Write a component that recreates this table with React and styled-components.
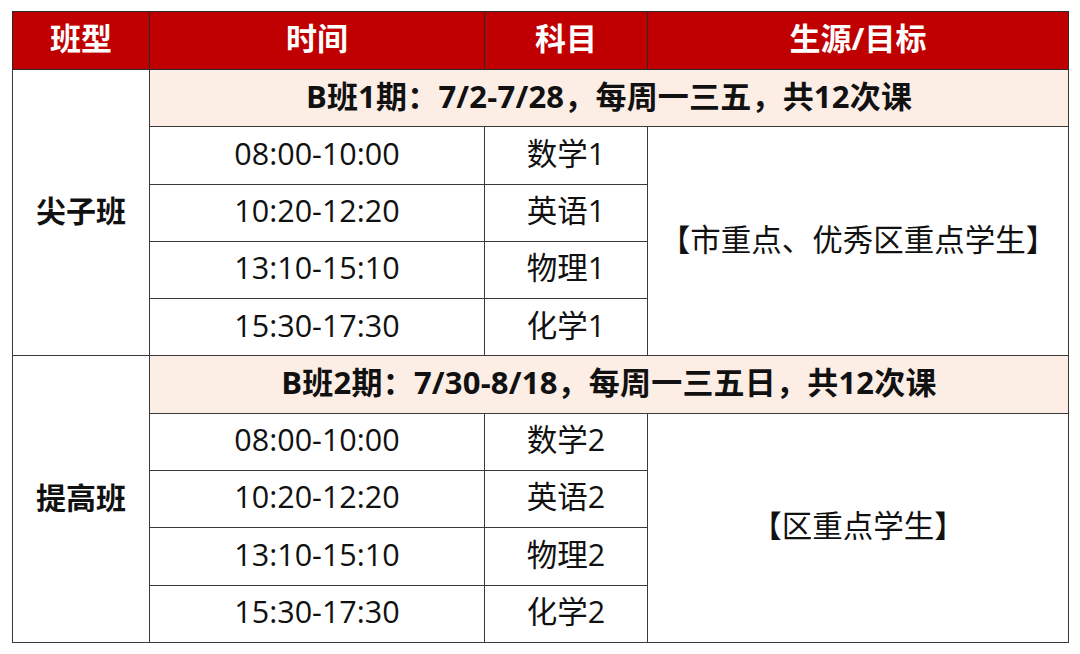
import styled, { createGlobalStyle } from "styled-components";

const GlobalStyle = createGlobalStyle`
  html, body {
    margin: 0;
    padding: 0;
    background: #ffffff;
  }
  body {
    font-family: "Open Sans", "Noto Sans CJK SC", sans-serif;
  }
`;

const Page = styled.div`
  width: 1080px;
  height: 654px;
  padding: 11px 12px 0 12px;
  box-sizing: border-box;
`;

const Table = styled.table`
  width: 1056px;
  border-collapse: collapse;
  table-layout: fixed;
  color: #111;
`;

const HeadRow = styled.tr`
  height: 58px;
`;

const HeadCell = styled.th`
  padding: 0 0 4px 0;
  background: #c00000;
  color: #ffffff;
  font-size: 31px;
  line-height: 1.3;
  font-weight: 700;
  border: 1.5px solid #2b2b2b;
  text-align: center;
  vertical-align: middle;
`;

const Row = styled.tr`
  height: 57.3px;
`;

const Cell = styled.td`
  padding: 0 0 4px 0;
  border: 1.5px solid #3a3a3a;
  text-align: center;
  vertical-align: middle;
  line-height: 1.3;
  font-size: ${(p) => (p.$band ? "31px" : p.$bold ? "30px" : "30.5px")};
  font-weight: ${(p) => (p.$bold ? 700 : 400)};
  background: ${(p) => (p.$band ? "#fcede5" : "#ffffff")};
  letter-spacing: ${(p) => (p.$band ? "0.2px" : "0")};
`;

const groups = [
  {
    name: "尖子班",
    term: "B班1期：7/2-7/28，每周一三五，共12次课",
    target: "【市重点、优秀区重点学生】",
    lessons: [
      ["08:00-10:00", "数学1"],
      ["10:20-12:20", "英语1"],
      ["13:10-15:10", "物理1"],
      ["15:30-17:30", "化学1"],
    ],
  },
  {
    name: "提高班",
    term: "B班2期：7/30-8/18，每周一三五日，共12次课",
    target: "【区重点学生】",
    lessons: [
      ["08:00-10:00", "数学2"],
      ["10:20-12:20", "英语2"],
      ["13:10-15:10", "物理2"],
      ["15:30-17:30", "化学2"],
    ],
  },
];

const App = () => {
  return (
    <Page>
      <GlobalStyle />
      <Table>
        <colgroup>
          <col style={{ width: 137 }} />
          <col style={{ width: 335 }} />
          <col style={{ width: 163 }} />
          <col style={{ width: 421 }} />
        </colgroup>
        <thead>
          <HeadRow>
            <HeadCell>班型</HeadCell>
            <HeadCell>时间</HeadCell>
            <HeadCell>科目</HeadCell>
            <HeadCell>生源/目标</HeadCell>
          </HeadRow>
        </thead>
        <tbody>
          {groups.map((g) => [
            <Row key={g.name + "-term"}>
              <Cell rowSpan={5} $bold>
                {g.name}
              </Cell>
              <Cell colSpan={3} $bold $band>
                {g.term}
              </Cell>
            </Row>,
            ...g.lessons.map((l, i) => (
              <Row key={g.name + i}>
                <Cell>{l[0]}</Cell>
                <Cell>{l[1]}</Cell>
                {i === 0 && <Cell rowSpan={4}>{g.target}</Cell>}
              </Row>
            )),
          ])}
        </tbody>
      </Table>
    </Page>
  );
};

export default App;
